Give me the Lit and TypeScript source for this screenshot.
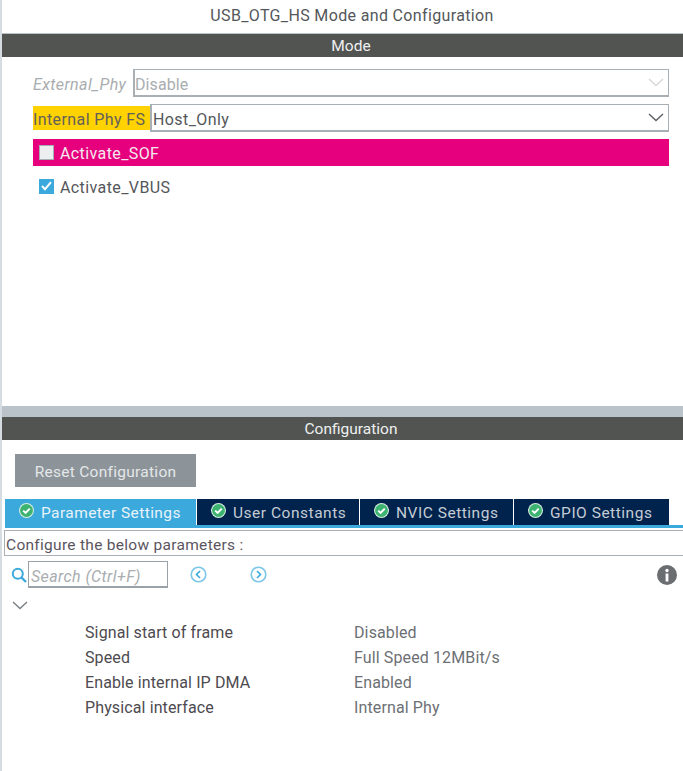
import { LitElement, html, css } from "lit";
import { customElement } from "lit/decorators.js";

const chevron = (color: string) => html`<svg class="chev" width="16" height="9" viewBox="0 0 16 9"><path d="M1 1l7 6.5L15 1" fill="none" stroke=${color} stroke-width="1.4"/></svg>`;
const ok = html`<svg class="ok" width="15" height="15" viewBox="0 0 15 15"><circle cx="7.5" cy="7.5" r="7.5" fill="#d8efe0"/><circle cx="7.5" cy="7.5" r="6.4" fill="#3cb371"/><path d="M4.2 7.6l2.4 2.3 4.2-4.3" fill="none" stroke="#fff" stroke-width="2"/></svg>`;
const arrow = (d: string) => html`<svg width="17" height="17" viewBox="0 0 17 17"><circle cx="8.5" cy="8.5" r="7.3" fill="none" stroke="#7cc6e8" stroke-width="1.6"/><path d=${d} fill="none" stroke="#3ca9dc" stroke-width="1.6"/></svg>`;

@customElement("app-root")
export class AppRoot extends LitElement {
  static styles = css`
    :host { display: block; width: 683px; height: 771px; background: #fff; font-family: Roboto, "Liberation Sans", sans-serif; color: #54575a; font-size: 16px; overflow: hidden; }
    .page { height: 771px; box-sizing: border-box; border-left: 2px solid #d5dde3; display: flex; flex-direction: column; }
    .title { height: 33px; display: flex; align-items: center; justify-content: center; font-size: 16px; letter-spacing: 0.35px; padding: 0 0 2px 19px; box-sizing: border-box; }
    .bar { height: 24px; flex: none; background: #525452; color: #eef0f0; display: flex; align-items: center; justify-content: center; font-size: 15.5px; box-sizing: border-box; border-top: 1px solid #b9c3c9; padding-left: 17px; }
    .bar.low { padding-top: 1px; }
    .mode { height: 349px; box-sizing: border-box; flex: none; padding: 12px 14px 0 31px; display: flex; flex-direction: column; letter-spacing: 0.4px; }
    .row { display: flex; height: 28px; }
    .row + .row { margin-top: 7px; }
    .label { display: flex; align-items: center; height: 28px; white-space: nowrap; padding-top: 2px; box-sizing: border-box; }
    .ext { font-style: italic; color: #a9adb0; width: 100px; }
    .int { background: #ffd200; height: 24px; align-self: center; width: 117px; color: #64605a; padding-top: 2px; }
    .select { flex: 1; box-sizing: border-box; height: 28px; border: 1px solid #a8b0b6; border-bottom-width: 2px; border-left-width: 2px; display: flex; align-items: center; justify-content: space-between; padding: 0 4px 0 1px; }
    .select .text { padding-top: 3px; }
    .select.off { color: #a9adb0; padding-left: 0; letter-spacing: 0.1px; }
    .pink { background: #e6007e; color: #f4e9ef; height: 27px; align-items: center; padding-left: 6px; gap: 6px; box-sizing: border-box; }
    .check { display: flex; align-items: center; gap: 6px; padding-left: 6px; margin-top: 6px !important; height: 28px; }
    .cap { padding-top: 2px; }
    .box { width: 15px; height: 15px; box-sizing: border-box; flex: none; }
    .box.empty { background: #eceeef; border: 1px solid #a6adb3; }
    .box.on { background: #3ca9dc; display: flex; align-items: center; justify-content: center; }
    .divider { height: 10px; flex: none; background: #b9c3c9; }
    .config { flex: 1; display: flex; flex-direction: column; padding-left: 3px; }
    .reset { margin: 14px 0 0 10px; width: 181px; height: 33px; box-sizing: border-box; background: #8d9499; color: #e4e7e9; display: flex; align-items: center; justify-content: center; letter-spacing: 0.28px; font-size: 15.5px; padding-top: 2px; }
    .tabs { margin-top: 12px; display: flex; height: 26px; gap: 1px; width: 664px; }
    .tab { background: #00234d; color: #c5ccd4; display: flex; align-items: center; gap: 7px; padding-left: 14px; box-sizing: border-box; letter-spacing: 0.52px; font-size: 15.5px; }
    .tab .ok { margin-top: -4px; }
    .tab.active { background: #3ca9dc; color: #e8f3f9; letter-spacing: 0.42px; }
    .line { height: 3px; background: #3ca9dc; flex: none; margin-bottom: 2px; }
    .hint { height: 26px; flex: none; box-sizing: border-box; border: 1px solid #a8b0b6; border-right: 0; display: flex; align-items: center; padding: 3px 0 0 1px; color: #5b5560; letter-spacing: 0.29px; font-size: 15.5px; margin-left: -1px; }
    .tools { display: flex; align-items: center; height: 27px; margin-top: 5px; padding-left: 6px; }
    .search { width: 140px; height: 27px; box-sizing: border-box; border: 1px solid #9aa2a8; border-bottom-width: 2px; margin-left: 1px; display: flex; align-items: center; padding: 4px 0 0 2px; font-style: italic; color: #a9adb0; font-size: 16px; letter-spacing: 0.4px; white-space: nowrap; }
    .nav { display: flex; gap: 43px; margin-left: 22px; }
    .info { margin-left: auto; margin-right: 6px; display: flex; }
    .tree { padding: 13px 0 0 7px; height: 9px; display: flex; }
    .params { margin-top: 10px; padding-left: 80px; display: grid; grid-template-columns: 269px 1fr; grid-auto-rows: 25px; align-items: center; letter-spacing: 0.12px; }
    .name { color: #4d4a50; }
    .value { color: #6c7074; }
  `;

  render() {
    const tabs: [string, number, boolean][] = [
      ["Parameter Settings", 191, true],
      ["User Constants", 162, false],
      ["NVIC Settings", 153, false],
      ["GPIO Settings", 155, false],
    ];
    const params = [
      ["Signal start of frame", "Disabled"],
      ["Speed", "Full Speed 12MBit/s"],
      ["Enable internal IP DMA", "Enabled"],
      ["Physical interface", "Internal Phy"],
    ];
    return html`<div class="page">
      <div class="title">USB_OTG_HS Mode and Configuration</div>
      <div class="bar">Mode</div>
      <div class="mode">
        <div class="row"><span class="label ext">External_Phy</span><div class="select off"><span class="text">Disable</span>${chevron("#d6d9db")}</div></div>
        <div class="row"><span class="label int">Internal Phy FS</span><div class="select"><span class="text">Host_Only</span>${chevron("#5c6063")}</div></div>
        <div class="row pink"><span class="box empty"></span><span class="cap">Activate_SOF</span></div>
        <div class="row check"><span class="box on"><svg width="11" height="10" viewBox="0 0 11 10"><path d="M1 5l3 3.2L10 1.2" fill="none" stroke="#fff" stroke-width="2"/></svg></span><span class="cap">Activate_VBUS</span></div>
      </div>
      <div class="divider"></div>
      <div class="bar low">Configuration</div>
      <div class="config">
        <div class="reset">Reset Configuration</div>
        <div class="tabs">
          ${tabs.map(([t, w, a]) => html`<div class="tab ${a ? "active" : ""}" style="width:${w}px">${ok}<span class="cap">${t}</span></div>`)}
        </div>
        <div class="line"></div>
        <div class="hint">Configure the below parameters :</div>
        <div class="tools">
          <svg width="16" height="16" viewBox="0 0 16 16"><circle cx="6.8" cy="6.8" r="5" fill="none" stroke="#3ca9dc" stroke-width="2"/><path d="M10.5 10.5L15 15" stroke="#3ca9dc" stroke-width="2.4"/></svg>
          <div class="search">Search (Ctrl+F)</div>
          <div class="nav">${arrow("M10 5L6.5 8.5 10 12")}${arrow("M7 5l3.5 3.5L7 12")}</div>
          <svg class="info" width="20" height="20" viewBox="0 0 20 20"><circle cx="10" cy="10" r="10" fill="#6b6e70"/><rect x="8.6" y="8.5" width="2.8" height="8" fill="#fff"/><circle cx="10" cy="5.5" r="1.7" fill="#fff"/></svg>
        </div>
        <div class="tree">${chevron("#7b7f82")}</div>
        <div class="params">
          ${params.map(([n, v]) => html`<span class="name">${n}</span><span class="value">${v}</span>`)}
        </div>
      </div>
    </div>`;
  }
}
